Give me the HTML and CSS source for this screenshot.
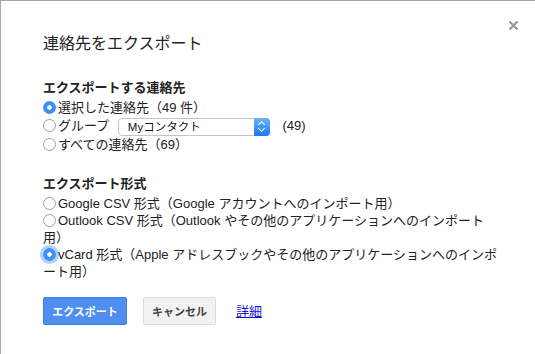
FILE: index.html
```html
<!DOCTYPE html>
<html lang="ja">
  <head>
    <meta charset="UTF-8" />
    <meta name="viewport" content="width=device-width, initial-scale=1.0" />
    <title>連絡先をエクスポート</title>
    <link rel="stylesheet" href="styles.css">
  </head>
  <body>
    <div class="dialog">
      <span class="close">
        <svg width="11" height="11" viewBox="0 0 11 11">
          <path d="M1.5 1.5 L9.5 9.5 M9.5 1.5 L1.5 9.5" stroke="#9a9a9a" stroke-width="2.4" fill="none" />
        </svg>
      </span>
      <h1 class="title">連絡先をエクスポート</h1>

      <div class="section">
        <div class="section-title">エクスポートする連絡先</div>
        <label class="option"><span class="radio checked"></span>選択した連絡先（49 件）</label>
        <label class="option"><span class="radio"></span>グループ
          <span class="select">Myコンタクト<span class="stepper"></span></span>
          <span class="count">(49)</span>
        </label>
        <label class="option"><span class="radio"></span>すべての連絡先（69）</label>
      </div>

      <div class="section formats">
        <div class="section-title">エクスポート形式</div>
        <div class="option wrap"><span class="radio"></span>Google CSV 形式（Google アカウントへのインポート用）</div>
        <div class="option wrap"><span class="radio"></span>Outlook CSV 形式（Outlook やその他のアプリケーションへのインポート用）</div>
        <div class="option wrap"><span class="radio checked focus"></span>vCard 形式（Apple アドレスブックやその他のアプリケーションへのインポート用）</div>
      </div>

      <div class="buttons">
        <button class="btn primary">エクスポート</button>
        <button class="btn">キャンセル</button>
        <a class="more" href="#">詳細</a>
      </div>
    </div>
  </body>
</html>
```

FILE: styles.css
```css
html,
body {
  margin: 0;
  height: 100%;
  background: #fff;
}
body {
  font-family: "Liberation Sans", "Noto Sans CJK JP", sans-serif;
  font-size: 13px;
  color: #222;
}
.dialog {
  position: relative;
  box-sizing: border-box;
  height: 100%;
  border-top: 1px solid #a8a8a0;
  border-left: 1px solid #a8a8a0;
  padding: 31px 34px 0 42px;
}
.close {
  position: absolute;
  top: 19px;
  right: 16px;
  line-height: 0;
}
.title {
  margin: 0 0 23px;
  font-size: 16px;
  font-weight: normal;
  line-height: 24px;
  color: #222;
}
.section {
  margin-bottom: 21px;
}
.formats {
  margin-bottom: 17px;
}
.section-title {
  font-weight: bold;
  line-height: 18px;
  margin-bottom: 2px;
}
.option {
  display: block;
  line-height: 18px;
}
.wrap {
  line-height: 17px;
}
.radio {
  display: inline-block;
  box-sizing: border-box;
  width: 13px;
  height: 13px;
  margin: 0 2px 0 0;
  border: 1px solid #a0a0a0;
  border-radius: 50%;
  background: #fff;
  vertical-align: -2px;
}
.radio.checked {
  border: none;
  background: radial-gradient(circle, #fff 0 2px, #3d8ef5 2.5px);
}
.radio.focus {
  box-shadow: 0 0 0 3px rgba(80, 150, 240, 0.45);
}
.select {
  display: inline-flex;
  align-items: center;
  position: relative;
  box-sizing: border-box;
  width: 152px;
  height: 18px;
  margin-left: 5px;
  padding-left: 9px;
  border: 1px solid #c4c4c4;
  border-radius: 4px;
  font-size: 11.5px;
  vertical-align: middle;
  color: #111;
}
.stepper {
  position: absolute;
  top: -1px;
  right: -1px;
  width: 16px;
  height: 18px;
  border-radius: 0 4px 4px 0;
  background: linear-gradient(#6cb3fa, #1a79f3);
}
.stepper::before,
.stepper::after {
  content: "";
  position: absolute;
  left: 5px;
  width: 4px;
  height: 4px;
  border-left: 1.5px solid #fff;
  border-top: 1.5px solid #fff;
}
.stepper::before {
  top: 4px;
  transform: rotate(45deg);
}
.stepper::after {
  top: 8px;
  transform: rotate(225deg);
}
.count {
  margin-left: 9px;
}
.buttons {
  display: flex;
  align-items: center;
}
.btn {
  height: 28px;
  padding: 0 8px;
  margin-right: 16px;
  border: 1px solid #dcdcdc;
  border-radius: 2px;
  background: #f2f2f2;
  color: #444;
  font-family: inherit;
  font-size: 11px;
  font-weight: bold;
  min-width: 72px;
}
.btn.primary {
  min-width: 84px;
  background: #4d8ef0;
  border-color: #3d7de8;
  color: #fff;
}
.more {
  margin-left: 4px;
  color: #1515d0;
  font-size: 13px;
}
```
